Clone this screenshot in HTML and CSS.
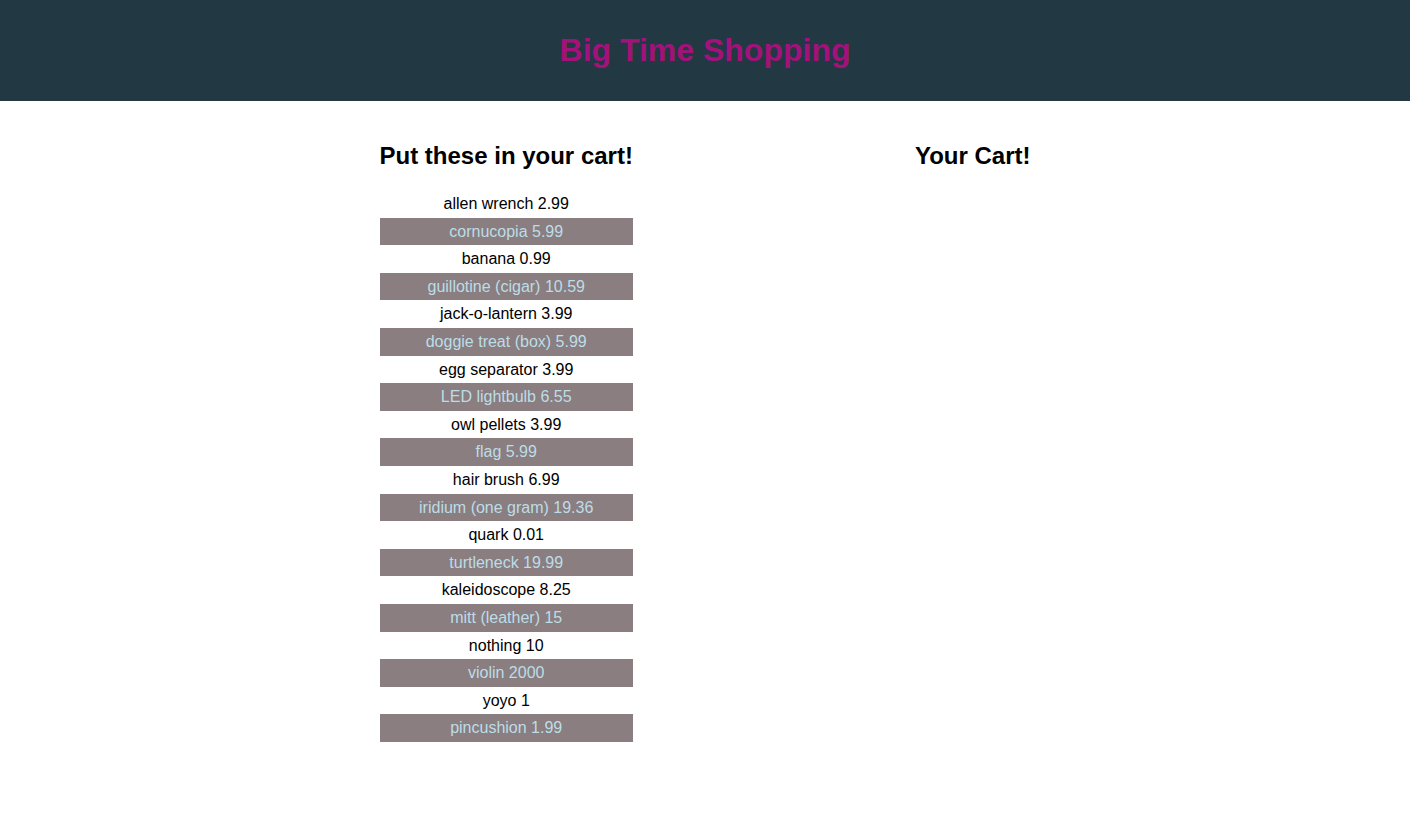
FILE: index.html
```html
<!DOCTYPE html>
<html>
<head>
<meta charset="utf-8">
<title>Big Time Shopping</title>
<link rel="stylesheet" href="styles.css">
</head>
<body>
<header class="site-header">
  <h1 class="site-title">Big Time Shopping</h1>
</header>
<main class="shop">
  <section class="catalog">
    <h2 class="col-title">Put these in your cart!</h2>
    <ul class="items">
      <li class="item">allen wrench 2.99</li>
      <li class="item">cornucopia 5.99</li>
      <li class="item">banana 0.99</li>
      <li class="item">guillotine (cigar) 10.59</li>
      <li class="item">jack-o-lantern 3.99</li>
      <li class="item">doggie treat (box) 5.99</li>
      <li class="item">egg separator 3.99</li>
      <li class="item">LED lightbulb 6.55</li>
      <li class="item">owl pellets 3.99</li>
      <li class="item">flag 5.99</li>
      <li class="item">hair brush 6.99</li>
      <li class="item">iridium (one gram) 19.36</li>
      <li class="item">quark 0.01</li>
      <li class="item">turtleneck 19.99</li>
      <li class="item">kaleidoscope 8.25</li>
      <li class="item">mitt (leather) 15</li>
      <li class="item">nothing 10</li>
      <li class="item">violin 2000</li>
      <li class="item">yoyo 1</li>
      <li class="item">pincushion 1.99</li>
    </ul>
  </section>
  <section class="cart">
    <h2 class="col-title">Your Cart!</h2>
  </section>
</main>
</body>
</html>
```
FILE: styles.css
```css
html, body {
  margin: 0;
  padding: 0;
}
body {
  font-family: "Liberation Sans", Arial, Helvetica, sans-serif;
  color: #000;
  background: #fff;
}
.site-header {
  background: #223843;
  height: 101px;
  display: flex;
  align-items: center;
  justify-content: center;
}
.site-title {
  margin: 0;
  font-size: 32px;
  line-height: 37px;
  font-weight: bold;
  color: #a3117a;
}
.shop {
  display: flex;
  justify-content: center;
  align-items: flex-start;
  gap: 282px;
  padding-top: 41px;
}
.col-title {
  margin: 0 0 20px;
  font-size: 24px;
  line-height: 28px;
  font-weight: bold;
  text-align: center;
  white-space: nowrap;
}
.items {
  list-style: none;
  margin: 0;
  padding: 0;
}
.item {
  height: 27.6px;
  line-height: 27.6px;
  font-size: 16px;
  text-align: center;
}
.item:nth-child(even) {
  background: #8a7e81;
  color: #bcdde7;
}
```
